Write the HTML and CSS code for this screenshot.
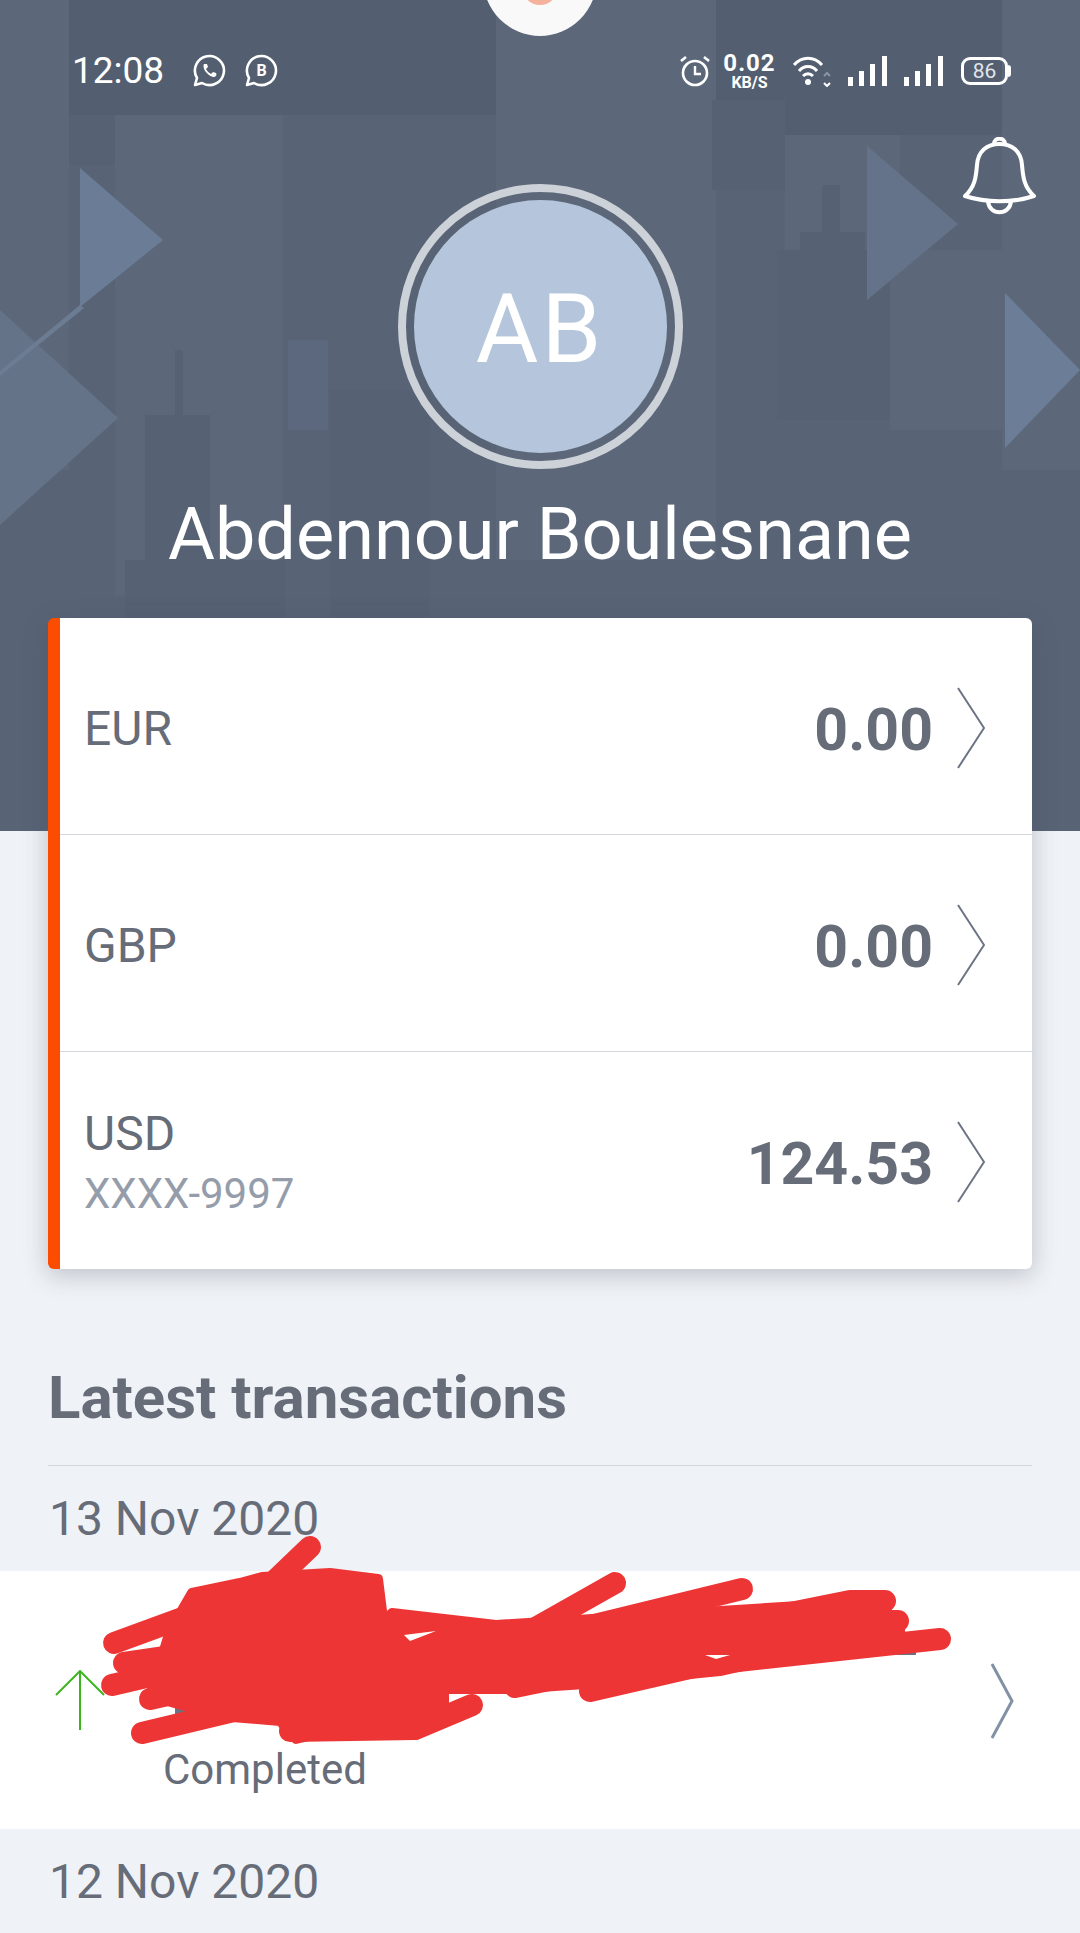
FILE: index.html
```html
<!DOCTYPE html>
<html lang="en">
<head>
    <meta charset="UTF-8">
    <meta name="viewport" content="width=device-width, initial-scale=1.0">
    <title>Accounts</title>
    <link rel="stylesheet" href="styles.css">
</head>
<body>
    <header class="hero">
        <svg class="skyline" viewBox="0 0 1080 831" width="1080" height="831">
            <g fill="#535f71">
                <rect x="69" y="0" width="427" height="115"/>
                <rect x="716" y="0" width="286" height="135"/>
            </g>
            <g fill="#5c6879">
                <rect x="0" y="0" width="69" height="470"/>
                <rect x="496" y="0" width="220" height="560"/>
                <rect x="1002" y="0" width="78" height="470"/>
                <rect x="115" y="115" width="168" height="480"/>
                <rect x="785" y="135" width="115" height="130"/>
                <rect x="890" y="250" width="112" height="180"/>
            </g>
            <g fill="#566173">
                <rect x="69" y="115" width="46" height="50"/>
                <rect x="712" y="100" width="73" height="90"/>
                <rect x="175" y="350" width="8" height="70"/>
                <rect x="145" y="415" width="65" height="200"/>
                <rect x="822" y="185" width="18" height="50"/>
                <rect x="800" y="232" width="65" height="30"/>
                <rect x="777" y="250" width="113" height="170"/>
                <rect x="330" y="390" width="100" height="230"/>
                <rect x="125" y="560" width="160" height="60"/>
            </g>
            <rect x="288" y="340" width="40" height="90" fill="#5b687e"/>
            <polygon points="0,310 118,418 0,525" fill="#647388"/>
            <polygon points="80,168 163,240 80,307" fill="#6b7d96"/>
            <polygon points="867,146 958,224 867,300" fill="#65738a"/>
            <polygon points="1005,293 1080,370 1005,448" fill="#6c7e97"/>
            <polygon points="80,305 0,371 0,376 84,308" fill="#6c7c93"/>
        </svg>

        <div class="camera"><span class="camera-dot"></span></div>

        <div class="status-bar">
            <div class="status-left">
                <span class="clock">12:08</span>
                <svg class="status-icon" viewBox="0 0 34 34" width="34" height="34">
                    <path d="M3 31 L5 24 A14.5 14.5 0 1 1 10 29 Z" fill="none" stroke="#fff" stroke-width="2.6" stroke-linejoin="round"/>
                    <path d="M12 10 C10 13 14 21 21 23 C24 23 25 21 24 19 L21 18 L19 20 C17 19 15 17 14 15 L16 13 L15 10 Z" fill="#fff"/>
                </svg>
                <svg class="status-icon" viewBox="0 0 34 34" width="34" height="34">
                    <path d="M3 31 L5 24 A14.5 14.5 0 1 1 10 29 Z" fill="none" stroke="#fff" stroke-width="2.6" stroke-linejoin="round"/>
                    <text x="17.5" y="22" class="biz-letter">B</text>
                </svg>
            </div>
            <div class="status-right">
                <svg class="alarm" viewBox="0 0 30 32" width="30" height="32">
                    <circle cx="15" cy="18" r="12" fill="none" stroke="#fff" stroke-width="2.6"/>
                    <path d="M15 11 V19 H21" fill="none" stroke="#fff" stroke-width="2.4"/>
                    <path d="M1 6 L6 2 M29 6 L24 2" stroke="#fff" stroke-width="2.6"/>
                </svg>
                <div class="speed"><span class="speed-num">0.02</span><span class="speed-unit">KB/S</span></div>
                <svg class="wifi" viewBox="0 0 38 32" width="38" height="32">
                    <path d="M1 10 C9 1 21 1 29 10 M6 16 C11 10 19 10 24 16 M10 21 C13 18 17 18 20 21" fill="none" stroke="#fff" stroke-width="3"/>
                    <circle cx="15" cy="27" r="3" fill="#fff"/>
                    <path d="M31 28 L34 31 L37 28" fill="none" stroke="#fff" stroke-width="2"/>
                    <path d="M31 21 L34 18 L37 21" fill="none" stroke="#8a94a3" stroke-width="2"/>
                </svg>
                <svg class="signal" viewBox="0 0 39 30" width="39" height="30">
                    <rect x="0" y="21" width="5" height="9" fill="#fff"/>
                    <rect x="11" y="15" width="5" height="15" fill="#fff"/>
                    <rect x="22" y="8" width="5" height="22" fill="#fff"/>
                    <rect x="34" y="0" width="5" height="30" fill="#fff"/>
                </svg>
                <svg class="signal" viewBox="0 0 39 30" width="39" height="30">
                    <rect x="0" y="21" width="5" height="9" fill="#fff"/>
                    <rect x="11" y="15" width="5" height="15" fill="#fff"/>
                    <rect x="22" y="8" width="5" height="22" fill="#fff"/>
                    <rect x="34" y="0" width="5" height="30" fill="#fff"/>
                </svg>
                <div class="battery"><span>86</span></div>
            </div>
        </div>

        <svg class="bell" viewBox="0 0 73 78" width="73" height="78">
            <path d="M2 59 C12 50 13 40 14 28 C15 14 24 7 36.500 7 C49 7 58 14 59 28 C60 40 61 50 71 59 C50 66 23 66 2 59 Z" fill="none" stroke="#fff" stroke-width="4" stroke-linejoin="round"/>
            <path d="M25 64 C26 79 47 79 48 64" fill="none" stroke="#fff" stroke-width="4"/>
            <path d="M31 7 C31 0 42 0 42 7" fill="none" stroke="#fff" stroke-width="4"/>
        </svg>

        <div class="avatar-ring">
            <div class="avatar">AB</div>
        </div>
        <h1 class="user-name">Abdennour Boulesnane</h1>
    </header>

    <main class="content">
        <section class="accounts">
            <div class="account">
                <div class="account-label"><span class="currency">EUR</span></div>
                <span class="amount">0.00</span>
                <svg class="chevron" viewBox="0 0 28 82" width="28" height="82"><path d="M1 1 L27 41 L1 81" fill="none" stroke="#6b7482" stroke-width="2"/></svg>
            </div>
            <div class="account">
                <div class="account-label"><span class="currency">GBP</span></div>
                <span class="amount">0.00</span>
                <svg class="chevron" viewBox="0 0 28 82" width="28" height="82"><path d="M1 1 L27 41 L1 81" fill="none" stroke="#6b7482" stroke-width="2"/></svg>
            </div>
            <div class="account">
                <div class="account-label">
                    <span class="currency">USD</span>
                    <span class="account-no">XXXX-9997</span>
                </div>
                <span class="amount">124.53</span>
                <svg class="chevron" viewBox="0 0 28 82" width="28" height="82"><path d="M1 1 L27 41 L1 81" fill="none" stroke="#6b7482" stroke-width="2"/></svg>
            </div>
        </section>

        <h2 class="section-title">Latest transactions</h2>
        <div class="date-row">13 Nov 2020</div>

        <div class="transaction">
            <svg class="arrow" viewBox="0 0 50 60" width="50" height="60">
                <path d="M25 60 V2 M1 25 L25 1 L49 25" fill="none" stroke="#3db51e" stroke-width="2"/>
            </svg>
            <div class="transaction-text">
                <span class="transaction-status">Completed</span>
            </div>
            <svg class="chevron-small" viewBox="0 0 24 76" width="24" height="76"><path d="M2 1 L22 38 L2 75" fill="none" stroke="#8291a3" stroke-width="3"/></svg>

            <!-- hand drawn redaction over the transaction name -->
            <svg class="scribble" viewBox="0 0 1080 258" width="1080" height="258">
                <g fill="#6b7280">
                    <rect x="175" y="136" width="38" height="10"/>
                    <rect x="392" y="140" width="20" height="8"/>
                    <rect x="888" y="78" width="28" height="6"/>
                </g>
                <g fill="none" stroke="#ee3535" stroke-width="22" stroke-linecap="round" stroke-linejoin="round">
                    <path d="M310 -24 L262 22"/>
                    <path d="M114 72 L215 35"/>
                    <path d="M124 92 L220 78"/>
                    <path d="M112 114 L215 90"/>
                    <path d="M150 128 L230 110"/>
                    <path d="M142 162 L255 135"/>
                    <path d="M290 160 L415 158 L472 134"/>
                    <path d="M615 12 L530 60"/>
                    <path d="M742 18 L570 60"/>
                    <path d="M590 120 L720 90 L890 62"/>
                    <path d="M515 116 L700 78"/>
                    <path d="M700 60 L850 30 L885 30"/>
                    <path d="M720 92 L940 68"/>
                    <path d="M720 50 L898 50"/>
                </g>
                <g fill="#ee3535" stroke="#ee3535" stroke-width="10" stroke-linejoin="round">
                    <path d="M192 22 L240 12 L262 6 L330 2 L378 8 L382 40 L392 60 L400 100 L444 118 L444 136 L400 150 L330 160 L296 168 L280 150 L220 145 L150 125 L170 60 Z"/>
                    <path d="M392 42 L496 54 L880 30 L900 60 L720 100 L600 112 L510 118 L440 118 L396 100 Z"/>
                </g>
                <path d="M404 64 L436 60 L410 70 Z" fill="#fff"/>
                <path d="M705 84 L730 84 L716 88 Z" fill="#fff"/>
            </svg>
        </div>

        <div class="date-row">12 Nov 2020</div>
    </main>
</body>
</html>
```

FILE: styles.css
```css
* {
    box-sizing: border-box;
}
html, body {
    margin: 0;
    padding: 0;
}
body {
    width: 1080px;
    height: 1933px;
    overflow: hidden;
    background-color: #eff2f6;
    font-family: Roboto, "Liberation Sans", sans-serif;
    color: #666c78;
}
.hero {
    position: relative;
    height: 831px;
    background-color: #586476;
    overflow: hidden;
    padding-top: 184px;
    display: flex;
    flex-direction: column;
    align-items: center;
}
.skyline {
    position: absolute;
    left: 0;
    top: 0;
}
.camera {
    position: absolute;
    left: 483px;
    top: -80px;
    width: 114px;
    height: 116px;
    border-radius: 50%;
    background-color: #f9f9f9;
    display: flex;
    justify-content: center;
    align-items: flex-end;
}
.camera-dot {
    width: 36px;
    height: 36px;
    margin-bottom: 31px;
    border-radius: 50%;
    background-color: #f4b19b;
}
.status-bar {
    position: absolute;
    left: 72px;
    right: 69px;
    top: 49px;
    display: flex;
    justify-content: space-between;
    align-items: center;
    color: #fff;
}
.status-left, .status-right {
    display: flex;
    align-items: center;
}
.clock {
    font-size: 37px;
    margin-right: 28px;
}
.status-icon {
    margin-right: 18px;
}
.biz-letter {
    font-family: Roboto, sans-serif;
    font-size: 16px;
    font-weight: 700;
    fill: #fff;
    text-anchor: middle;
}
.speed {
    width: 49px;
    display: flex;
    flex-direction: column;
    align-items: center;
    gap: 1px;
    margin: 0 19px 0 15px;
    font-weight: 700;
    white-space: nowrap;
}
.speed-num {
    font-size: 24px;
    line-height: 22px;
    letter-spacing: 1px;
}
.speed-unit {
    font-size: 16px;
    line-height: 15px;
}
.signal {
    margin-left: 17px;
}
.battery {
    position: relative;
    width: 47px;
    height: 28px;
    margin: 0 3px 0 18px;
    border: 3px solid #fff;
    border-radius: 9px;
    color: #e2e5ea;
    font-size: 21px;
    line-height: 22px;
    text-align: center;
}
.battery::after {
    content: "";
    position: absolute;
    right: -6px;
    top: 5px;
    width: 3px;
    height: 12px;
    border-radius: 0 3px 3px 0;
    background-color: #fff;
}
.bell {
    position: absolute;
    left: 963px;
    top: 137px;
}
.avatar-ring {
    position: relative;
    width: 285px;
    height: 285px;
    padding: 8px;
    border: 8px solid #cdd2d8;
    border-radius: 50%;
}
.avatar {
    width: 100%;
    height: 100%;
    padding-top: 5px;
    border-radius: 50%;
    background-color: #b5c6dc;
    color: #fff;
    font-size: 96px;
    letter-spacing: 3px;
    display: flex;
    justify-content: center;
    align-items: center;
}
.user-name {
    position: relative;
    margin: 26px 0 0;
    font-size: 72px;
    line-height: 80px;
    font-weight: 400;
    white-space: nowrap;
    color: #fff;
}
.content {
    position: relative;
}
.accounts {
    position: relative;
    margin: -213px 48px 0;
    border-left: 12px solid #fc4c02;
    border-radius: 6px;
    background-color: #fff;
    box-shadow: 0 6px 24px rgba(60, 70, 85, 0.28);
}
.account {
    height: 217px;
    display: flex;
    align-items: center;
    padding: 6px 47px 0 24px;
    border-bottom: 1px solid #d3d6da;
}
.account:last-child {
    border-bottom: none;
}
.account-label {
    flex: 1;
    display: flex;
    flex-direction: column;
}
.currency {
    font-size: 48px;
    line-height: 60px;
}
.account-no {
    font-size: 42px;
    line-height: 60px;
    color: #959dab;
}
.amount {
    font-size: 59px;
    font-weight: 700;
    margin-right: 24px;
}
.chevron {
    margin-top: -3px;
}
.section-title {
    margin: 91px 48px 0;
    padding-bottom: 29px;
    border-bottom: 1px solid #d3d6da;
    font-size: 60px;
    line-height: 76px;
    font-weight: 700;
}
.date-row {
    padding: 0 49px;
    height: 105px;
    display: flex;
    align-items: center;
    font-size: 48px;
}
.transaction {
    position: relative;
    height: 258px;
    background-color: #fff;
    display: flex;
    align-items: center;
    padding: 0 66px 0 55px;
}
.transaction-text {
    flex: 1;
    margin-left: 58px;
    padding-top: 140px;
}
.transaction-status {
    font-size: 42px;
    line-height: 58px;
}
.chevron-small {
    margin-top: 2px;
}
.scribble {
    position: absolute;
    left: 0;
    top: 0;
    overflow: visible;
}
```
